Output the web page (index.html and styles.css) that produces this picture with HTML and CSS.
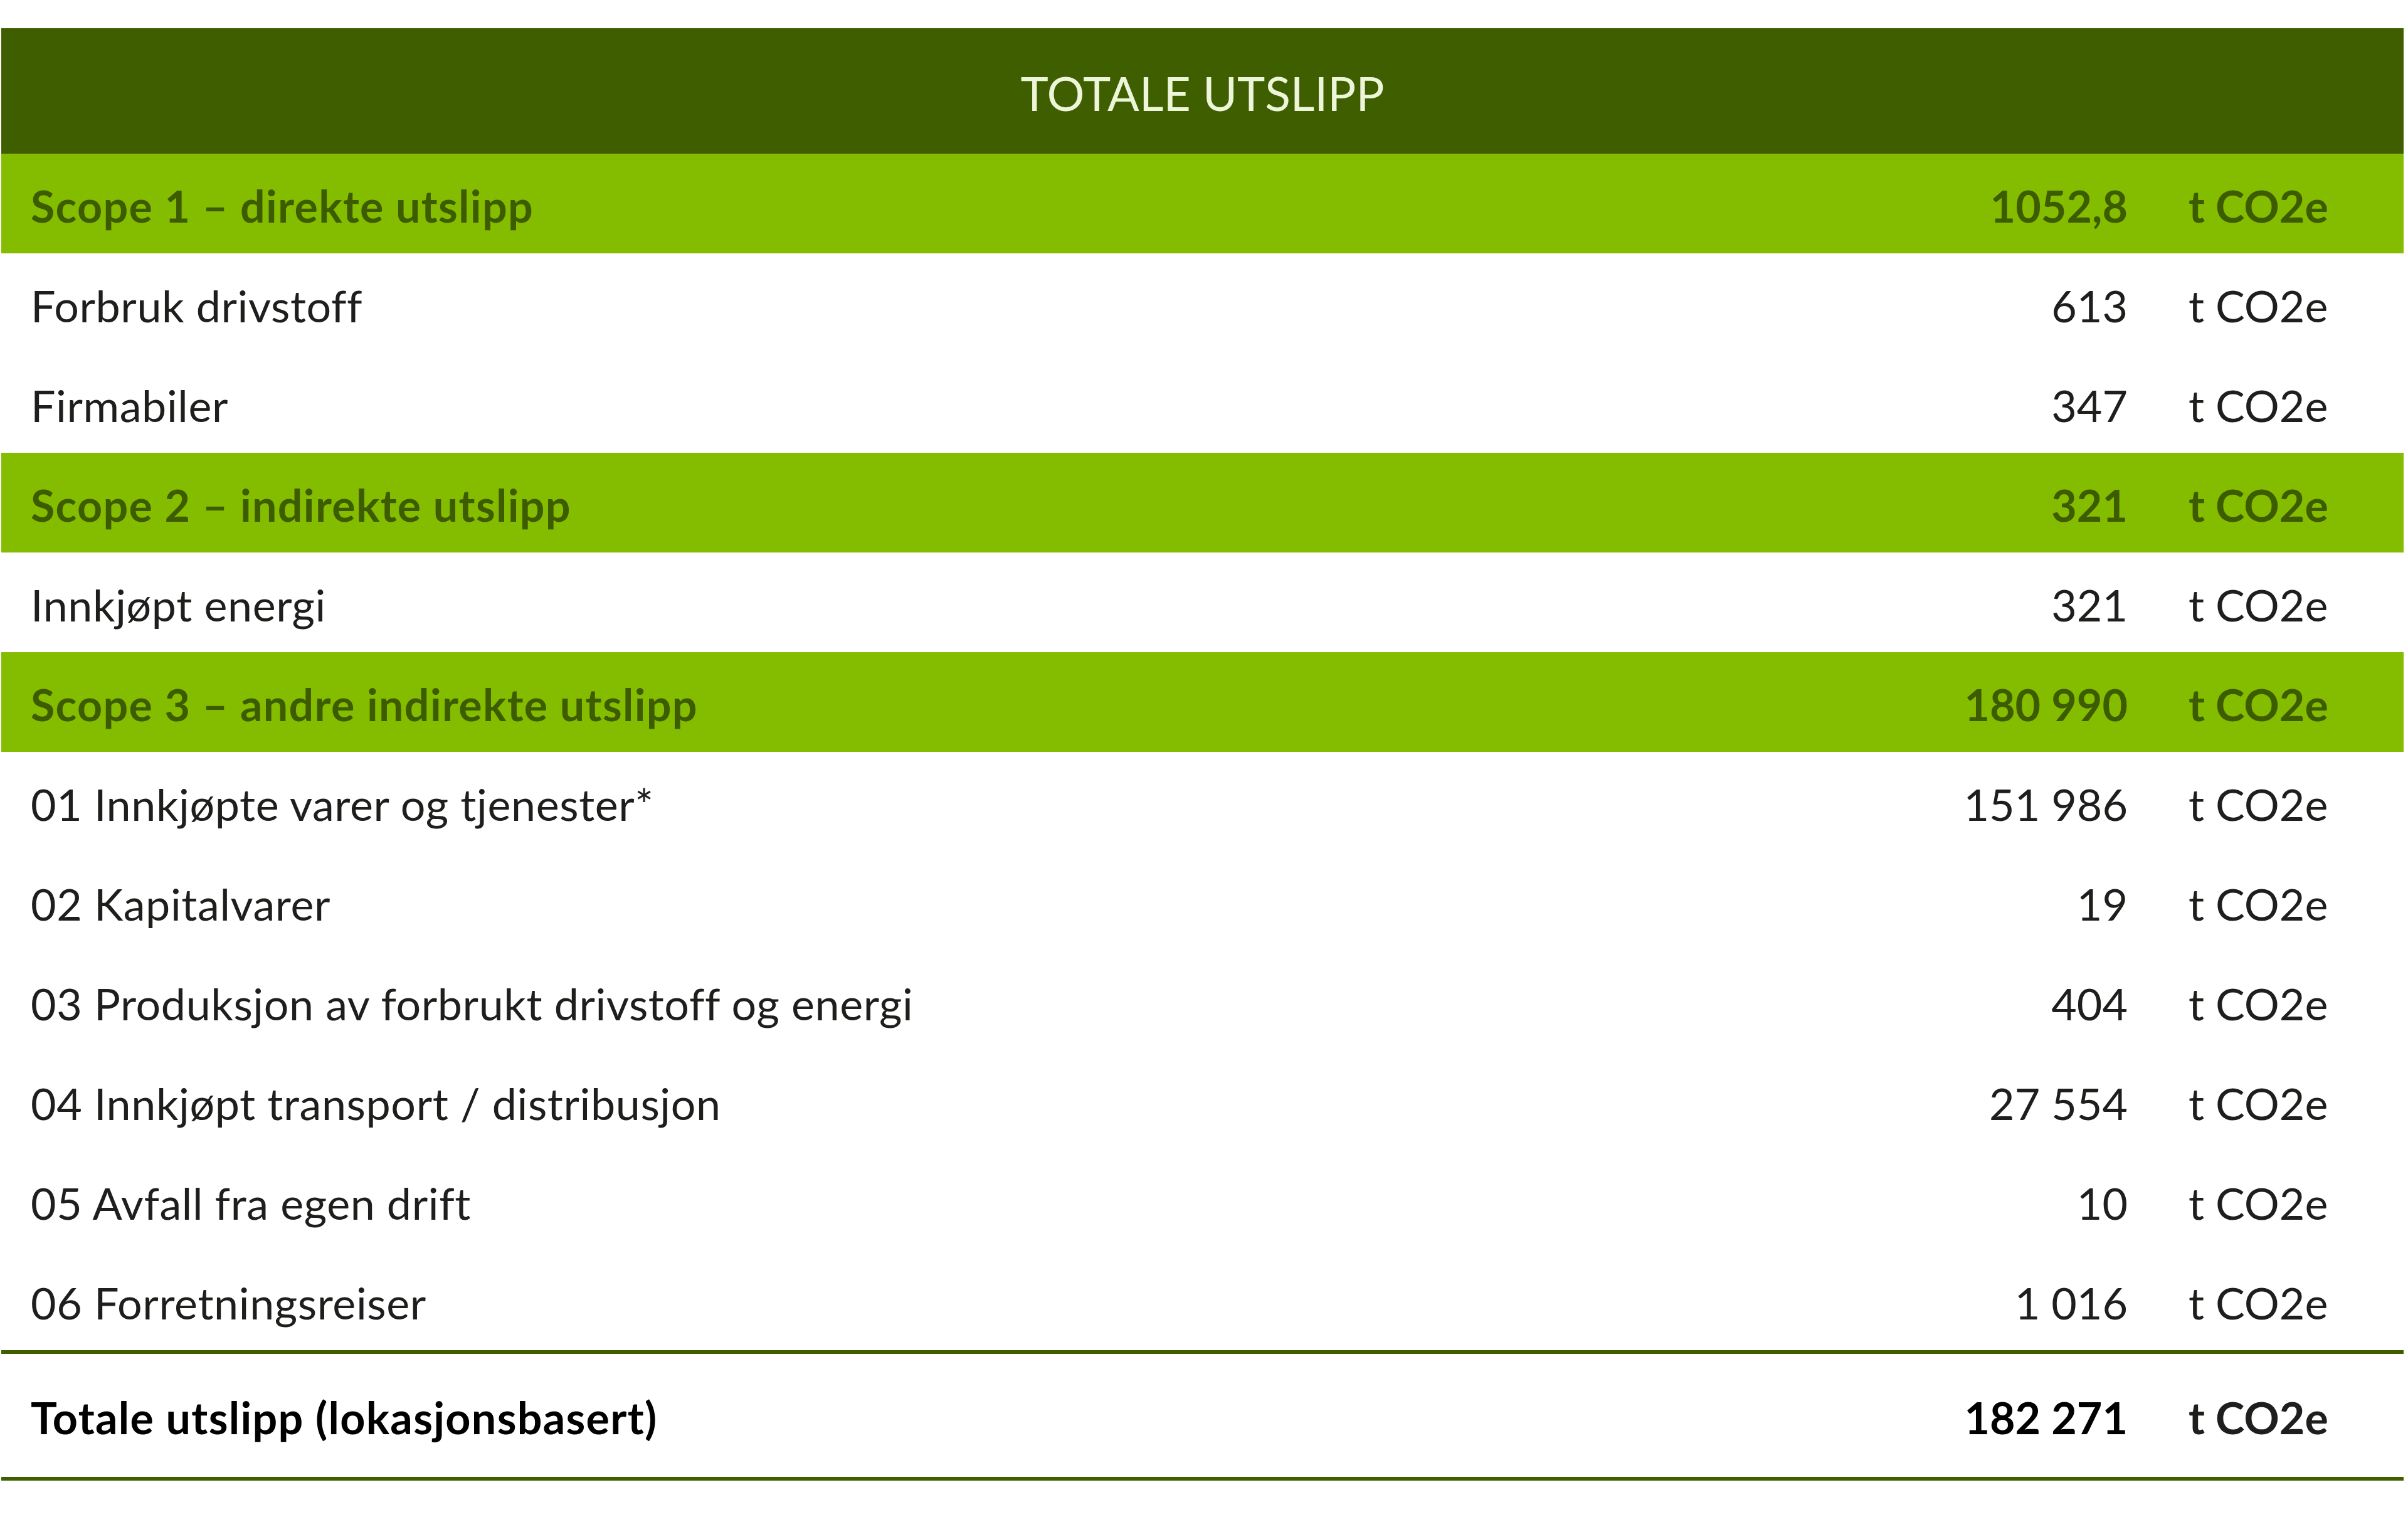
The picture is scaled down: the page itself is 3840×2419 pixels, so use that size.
FILE: index.html
```html
<!DOCTYPE html>
<html lang="no">
<head>
<meta charset="utf-8">
<title>Totale utslipp</title>
<link rel="stylesheet" href="styles.css">
</head>
<body>
<div class="table">
  <div class="title">TOTALE UTSLIPP</div>

  <div class="row scope"><span class="label">Scope 1 – direkte utslipp</span><span class="value">1052,8</span><span class="unit">t CO2e</span></div>
  <div class="row"><span class="label">Forbruk drivstoff</span><span class="value">613</span><span class="unit">t CO2e</span></div>
  <div class="row"><span class="label">Firmabiler</span><span class="value">347</span><span class="unit">t CO2e</span></div>

  <div class="row scope"><span class="label">Scope 2 – indirekte utslipp</span><span class="value">321</span><span class="unit">t CO2e</span></div>
  <div class="row"><span class="label">Innkjøpt energi</span><span class="value">321</span><span class="unit">t CO2e</span></div>

  <div class="row scope"><span class="label">Scope 3 – andre indirekte utslipp</span><span class="value">180 990</span><span class="unit">t CO2e</span></div>
  <div class="row"><span class="label">01 Innkjøpte varer og tjenester*</span><span class="value">151 986</span><span class="unit">t CO2e</span></div>
  <div class="row"><span class="label">02 Kapitalvarer</span><span class="value">19</span><span class="unit">t CO2e</span></div>
  <div class="row"><span class="label">03 Produksjon av forbrukt drivstoff og energi</span><span class="value">404</span><span class="unit">t CO2e</span></div>
  <div class="row"><span class="label">04 Innkjøpt transport / distribusjon</span><span class="value">27 554</span><span class="unit">t CO2e</span></div>
  <div class="row"><span class="label">05 Avfall fra egen drift</span><span class="value">10</span><span class="unit">t CO2e</span></div>
  <div class="row"><span class="label">06 Forretningsreiser</span><span class="value">1 016</span><span class="unit">t CO2e</span></div>

  <div class="row total"><span class="label">Totale utslipp (lokasjonsbasert)</span><span class="value">182 271</span><span class="unit">t CO2e</span></div>
</div>
</body>
</html>
```

FILE: styles.css
```css
html, body {
  margin: 0;
  padding: 0;
  background: #ffffff;
}

body {
  font-family: "Lato", "Open Sans", "Liberation Sans", sans-serif;
  color: #1e1f1c;
}

.table {
  width: 3831px;
  margin: 45px 0 0 2px;
}

.title {
  height: 200px;
  background: #3f5e00;
  color: #eef6da;
  font-size: 75px;
  font-weight: 400;
  display: flex;
  align-items: center;
  justify-content: center;
  padding-top: 6px;
  box-sizing: border-box;
}

.row {
  display: grid;
  grid-template-columns: 1fr 400px 343px;
  column-gap: 97px;
  align-items: center;
  height: 159px;
  padding-left: 47px;
  padding-top: 6px;
  box-sizing: border-box;
  font-size: 70px;
  line-height: 1;
  white-space: nowrap;
}

.label {
  letter-spacing: 0.6px;
}

.value {
  text-align: right;
}

.scope {
  background: #84bc00;
  color: #3d5c00;
  font-weight: 700;
}

.scope .label,
.total .label {
  letter-spacing: 1.3px;
}

.total {
  height: 208px;
  border-top: 6px solid #3f5e00;
  border-bottom: 6px solid #3f5e00;
  color: #000000;
  font-weight: 700;
}

.total .unit {
  color: #1e1f1c;
}
```
